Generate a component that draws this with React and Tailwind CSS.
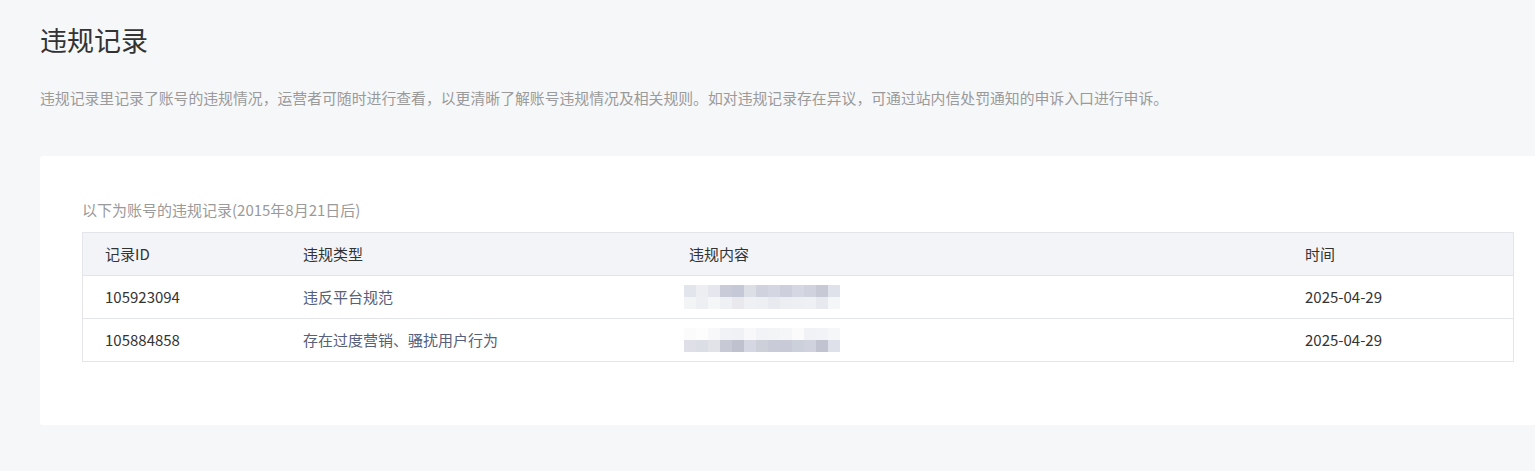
const rows = [
  {
    id: "105923094",
    type: "违反平台规范",
    date: "2025-04-29",
    blur: [
      ["bg-[#e3e5ec]", "bg-[#eceef2]", "bg-[#e6e7ee]", "bg-[#c9cbd8]", "bg-[#c5c8d6]", "bg-[#dcdfe6]", "bg-[#d0d2dd]", "bg-[#d4d7e2]", "bg-[#cdd0dc]", "bg-[#d5d8e2]", "bg-[#d0d3de]", "bg-[#c7c9d5]", "bg-[#dfe2ea]"],
      ["bg-[#f3f4f6]", "bg-[#eeeff2]", "bg-[#f5f6f8]", "bg-[#eff0f3]", "bg-[#e8e8ed]", "bg-[#eff0f3]", "bg-[#eeeff2]", "bg-[#e9eaef]", "bg-[#eceef1]", "bg-[#eeeff2]", "bg-[#eff0f3]", "bg-[#e8e9ee]", "bg-[#f5f6f8]"],
    ],
  },
  {
    id: "105884858",
    type: "存在过度营销、骚扰用户行为",
    date: "2025-04-29",
    blur: [
      ["bg-[#fbfbfc]", "bg-[#fdfdfd]", "bg-[#f8f8fa]", "bg-[#f1f2f5]", "bg-[#f0f1f4]", "bg-[#f8f8fa]", "bg-[#f2f3f6]", "bg-[#f3f4f6]", "bg-[#f5f6f8]", "bg-[#fbfbfc]", "bg-[#f1f2f5]", "bg-[#f2f3f6]", "bg-[#f6f7f9]"],
      ["bg-[#dfe0e7]", "bg-[#dcdee6]", "bg-[#e2e3e9]", "bg-[#c7c9d5]", "bg-[#bfc1cf]", "bg-[#d5d8e2]", "bg-[#cdcfd9]", "bg-[#c9ccd8]", "bg-[#c8cbd7]", "bg-[#ccd0db]", "bg-[#d0d3de]", "bg-[#c1c3d0]", "bg-[#dee1e9]"],
    ],
  },
];

function Blurred({ blur }) {
  return (
    <div className="flex flex-col">
      {blur.map((line, i) => (
        <div key={i} className="flex">
          {line.map((c, j) => (
            <div key={j} className={`h-[12px] w-[12px] ${c}`} />
          ))}
        </div>
      ))}
    </div>
  );
}

export default function App() {
  return (
    <div
      className="min-h-screen w-full overflow-hidden bg-[#f6f7f9] pb-[45px] pl-[40px] pt-[20px] text-[#333]"
      style={{ fontFamily: '"Microsoft YaHei", "Noto Sans CJK SC", sans-serif' }}
    >
      <h1 className="text-[27px] font-normal leading-[40px] text-[#333]">违规记录</h1>

      <p className="mt-[27px] text-[14.85px] leading-[22px] text-[#9a9a9a]">
        违规记录里记录了账号的违规情况，运营者可随时进行查看，以更清晰了解账号违规情况及相关规则。如对违规记录存在异议，可通过站内信处罚通知的申诉入口进行申诉。
      </p>

      <div className="mt-[47px] w-[1516px] rounded-[3px] bg-white pb-[63px] pl-[42px] pr-[42px] pt-[43px]">
        <p className="text-[15px] leading-[22px] text-[#9a9a9a]">以下为账号的违规记录(2015年8月21日后)</p>

        <div className="mt-[11px] border border-[#e4e5ea]">
          <div className="grid h-[42px] grid-cols-[198px_386px_616px_1fr] items-center bg-[#f3f4f8] text-[15px] text-[#333]">
            <div className="pl-[22px]">记录ID</div>
            <div className="pl-[22px]">违规类型</div>
            <div className="pl-[22px]">违规内容</div>
            <div className="pl-[22px]">时间</div>
          </div>
          {rows.map((r) => (
            <div
              key={r.id}
              className="grid h-[43px] grid-cols-[198px_386px_616px_1fr] items-center border-t border-[#e4e5ea] text-[15px]"
            >
              <div className="pl-[22px] text-[#333]">{r.id}</div>
              <div className="pl-[22px] text-[#56607a]">{r.type}</div>
              <div className="pl-[17px]">
                <Blurred blur={r.blur} />
              </div>
              <div className="pl-[22px] text-[#333]">{r.date}</div>
            </div>
          ))}
        </div>
      </div>
    </div>
  );
}
